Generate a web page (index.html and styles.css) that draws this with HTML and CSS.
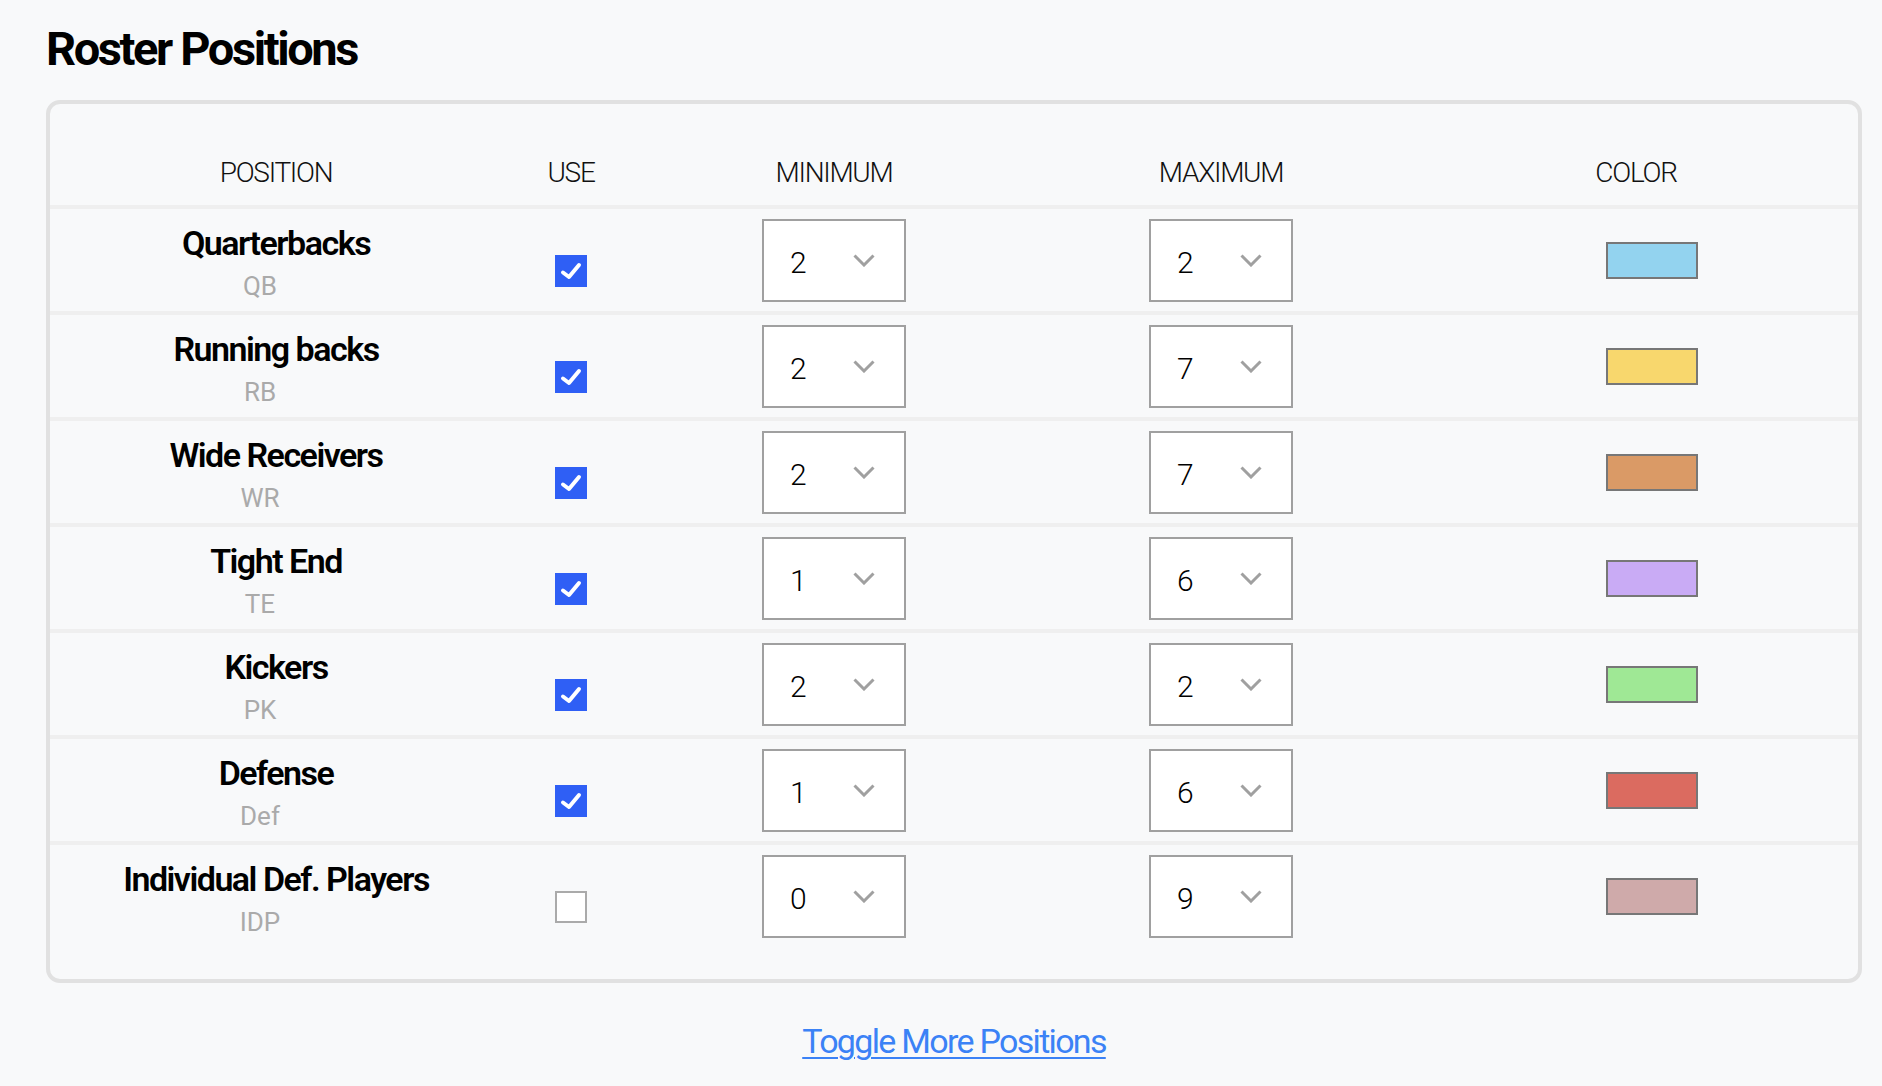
FILE: index.html
```html
<!DOCTYPE html>
<html lang="en">
<head>
  <meta charset="UTF-8">
  <title>Roster Positions</title>
  <meta name="viewport" content="width=device-width, initial-scale=1.0">
  <link rel="stylesheet" href="styles.css">
</head>
<body>
  <h1>Roster Positions</h1>

  <div class="roster">
    <div class="roster-row roster-head">
      <div>POSITION</div>
      <div>USE</div>
      <div>MINIMUM</div>
      <div>MAXIMUM</div>
      <div>COLOR</div>
    </div>

    <div class="roster-row roster-item">
      <div class="pos"><div class="pos-name">Quarterbacks</div><div class="pos-abbr">QB</div></div>
      <div class="use"><span class="check on"><svg viewBox="0 0 32 32"><path d="M8 17.5 L14 22 L24 10"/></svg></span></div>
      <div><div class="pick"><span>2</span><svg viewBox="0 0 22 13"><path d="M1.5 1.5 L11 11 L20.5 1.5"/></svg></div></div>
      <div><div class="pick"><span>2</span><svg viewBox="0 0 22 13"><path d="M1.5 1.5 L11 11 L20.5 1.5"/></svg></div></div>
      <div class="color"><span class="swatch sw-qb"></span></div>
    </div>

    <div class="roster-row roster-item">
      <div class="pos"><div class="pos-name">Running backs</div><div class="pos-abbr">RB</div></div>
      <div class="use"><span class="check on"><svg viewBox="0 0 32 32"><path d="M8 17.5 L14 22 L24 10"/></svg></span></div>
      <div><div class="pick"><span>2</span><svg viewBox="0 0 22 13"><path d="M1.5 1.5 L11 11 L20.5 1.5"/></svg></div></div>
      <div><div class="pick"><span>7</span><svg viewBox="0 0 22 13"><path d="M1.5 1.5 L11 11 L20.5 1.5"/></svg></div></div>
      <div class="color"><span class="swatch sw-rb"></span></div>
    </div>

    <div class="roster-row roster-item">
      <div class="pos"><div class="pos-name">Wide Receivers</div><div class="pos-abbr">WR</div></div>
      <div class="use"><span class="check on"><svg viewBox="0 0 32 32"><path d="M8 17.5 L14 22 L24 10"/></svg></span></div>
      <div><div class="pick"><span>2</span><svg viewBox="0 0 22 13"><path d="M1.5 1.5 L11 11 L20.5 1.5"/></svg></div></div>
      <div><div class="pick"><span>7</span><svg viewBox="0 0 22 13"><path d="M1.5 1.5 L11 11 L20.5 1.5"/></svg></div></div>
      <div class="color"><span class="swatch sw-wr"></span></div>
    </div>

    <div class="roster-row roster-item">
      <div class="pos"><div class="pos-name">Tight End</div><div class="pos-abbr">TE</div></div>
      <div class="use"><span class="check on"><svg viewBox="0 0 32 32"><path d="M8 17.5 L14 22 L24 10"/></svg></span></div>
      <div><div class="pick"><span>1</span><svg viewBox="0 0 22 13"><path d="M1.5 1.5 L11 11 L20.5 1.5"/></svg></div></div>
      <div><div class="pick"><span>6</span><svg viewBox="0 0 22 13"><path d="M1.5 1.5 L11 11 L20.5 1.5"/></svg></div></div>
      <div class="color"><span class="swatch sw-te"></span></div>
    </div>

    <div class="roster-row roster-item">
      <div class="pos"><div class="pos-name">Kickers</div><div class="pos-abbr">PK</div></div>
      <div class="use"><span class="check on"><svg viewBox="0 0 32 32"><path d="M8 17.5 L14 22 L24 10"/></svg></span></div>
      <div><div class="pick"><span>2</span><svg viewBox="0 0 22 13"><path d="M1.5 1.5 L11 11 L20.5 1.5"/></svg></div></div>
      <div><div class="pick"><span>2</span><svg viewBox="0 0 22 13"><path d="M1.5 1.5 L11 11 L20.5 1.5"/></svg></div></div>
      <div class="color"><span class="swatch sw-pk"></span></div>
    </div>

    <div class="roster-row roster-item">
      <div class="pos"><div class="pos-name">Defense</div><div class="pos-abbr">Def</div></div>
      <div class="use"><span class="check on"><svg viewBox="0 0 32 32"><path d="M8 17.5 L14 22 L24 10"/></svg></span></div>
      <div><div class="pick"><span>1</span><svg viewBox="0 0 22 13"><path d="M1.5 1.5 L11 11 L20.5 1.5"/></svg></div></div>
      <div><div class="pick"><span>6</span><svg viewBox="0 0 22 13"><path d="M1.5 1.5 L11 11 L20.5 1.5"/></svg></div></div>
      <div class="color"><span class="swatch sw-def"></span></div>
    </div>

    <div class="roster-row roster-item">
      <div class="pos"><div class="pos-name">Individual Def. Players</div><div class="pos-abbr">IDP</div></div>
      <div class="use"><span class="check"></span></div>
      <div><div class="pick"><span>0</span><svg viewBox="0 0 22 13"><path d="M1.5 1.5 L11 11 L20.5 1.5"/></svg></div></div>
      <div><div class="pick"><span>9</span><svg viewBox="0 0 22 13"><path d="M1.5 1.5 L11 11 L20.5 1.5"/></svg></div></div>
      <div class="color"><span class="swatch sw-idp"></span></div>
    </div>
  </div>

  <p class="more"><a href="#">Toggle More Positions</a></p>
</body>
</html>
```

FILE: styles.css
```css
body {
  margin: 0;
  padding: 21px 20px 0 46px;
  background: #f8f9fa;
  color: #111;
  font-family: "Roboto", "Liberation Sans", sans-serif;
}

h1 {
  margin: 0 0 23px;
  font-size: 47px;
  line-height: 56px;
  font-weight: 700;
  letter-spacing: -2.4px;
  color: #000;
}

.roster {
  border: 4px solid #e1e1e1;
  border-radius: 14px;
  padding-bottom: 32px;
}

.roster-row {
  display: grid;
  grid-template-columns: 452px 138px 388px 386px 1fr;
  align-items: center;
  text-align: center;
}

.roster-head {
  padding: 51px 0 14px;
  font-size: 28px;
  line-height: 36px;
  font-weight: 300;
  letter-spacing: -1.3px;
  border-bottom: 4px solid #efefef;
}

.roster-item {
  border-bottom: 4px solid #efefef;
}

.roster-item:last-child {
  border-bottom: none;
}

.pos {
  padding: 14px 0 2px;
}

.pos-name {
  font-size: 34px;
  line-height: 40px;
  font-weight: 600;
  letter-spacing: -1.5px;
  color: #000;
}

.pos-abbr {
  font-size: 26px;
  line-height: 46px;
  color: #aaa;
  margin-right: 32px;
}

.use {
  display: flex;
  justify-content: center;
}

.check {
  display: block;
  width: 32px;
  height: 32px;
  margin-top: 22px;
  box-sizing: border-box;
  border: 2px solid #aaa;
  background: #fff;
}

.check.on {
  border: none;
  background: #2f5ff5;
}

.check svg {
  display: block;
  width: 32px;
  height: 32px;
  fill: none;
  stroke: #fff;
  stroke-width: 4;
  stroke-linecap: round;
  stroke-linejoin: round;
}

.pick {
  display: flex;
  align-items: center;
  justify-content: space-between;
  width: 144px;
  height: 83px;
  margin: 0 auto;
  box-sizing: border-box;
  padding: 0 29px 0 26px;
  border: 2px solid #a0a0a0;
  background: #fff;
  font-size: 30px;
  font-weight: 300;
  color: #000;
}

.pick span {
  margin-top: 4px;
}

.pick svg {
  width: 22px;
  height: 13px;
  fill: none;
  stroke: #a0a0a0;
  stroke-width: 3;
}

.color {
  display: flex;
  justify-content: center;
}

.swatch {
  display: block;
  width: 92px;
  height: 37px;
  margin-left: 32px;
  box-sizing: border-box;
  border: 2px solid #777;
}

.sw-qb { background: #93d3ef; }
.sw-rb { background: #f8d76d; }
.sw-wr { background: #da9a66; }
.sw-te { background: #c9abf5; }
.sw-pk { background: #9fe895; }
.sw-def { background: #db6b60; }
.sw-idp { background: #cfaaaa; }

.more {
  margin: 37px 0 0;
  text-align: center;
}

.more a {
  font-size: 34px;
  line-height: 42px;
  letter-spacing: -1.7px;
  color: #3b82f6;
  text-decoration-thickness: 2px;
  text-underline-offset: 4px;
}
```
